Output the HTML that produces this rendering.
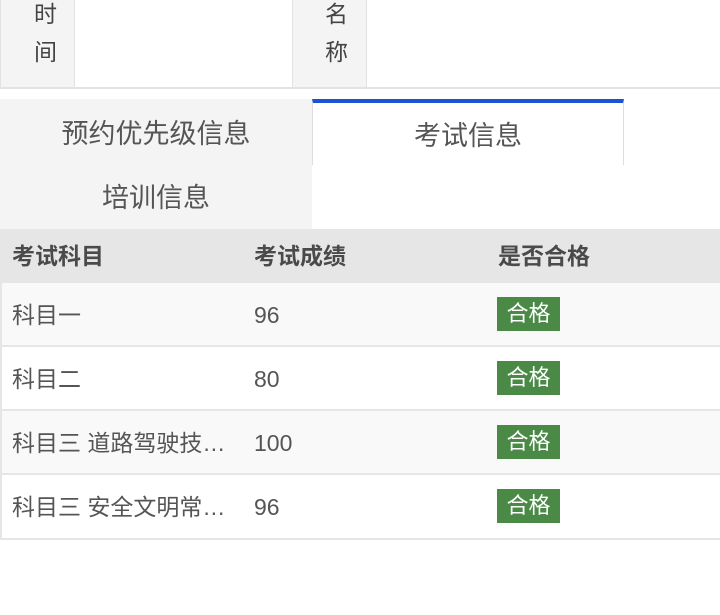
<!DOCTYPE html><html><head><meta charset="utf-8"><style>
*{margin:0;padding:0;box-sizing:border-box}
body{width:720px;height:615px;background:#fff;font-family:"Liberation Sans","Noto Sans CJK SC",sans-serif;color:#555;position:relative;overflow:hidden}
.a{position:absolute}
.lbl{background:#f4f4f4;color:#444;font-size:23px;text-align:center;line-height:38px;border-left:1px solid #e2e2e2;border-right:1px solid #e2e2e2}
.tab{font-size:27px;color:#555;text-align:center;line-height:70px}
.row{position:absolute;left:0;width:720px;height:64px;border-left:2px solid #e6e6e6;border-bottom:2px solid #e6e6e6;font-size:23px;color:#555}
.row span{position:absolute;top:0;line-height:64px}
.badge{position:absolute;left:495px;top:14px;width:63px;height:34px;background:#4a8a46;color:#fff;font-size:22px;text-align:center;line-height:34px}
</style></head><body>
<div class="a lbl" style="left:0;top:-5px;width:75px;height:94px;padding-left:16px">时<br>间</div>
<div class="a lbl" style="left:292px;top:-5px;width:75px;height:94px;padding-left:14px">名<br>称</div>
<div class="a" style="left:0;top:87px;width:720px;height:2px;background:#e2e2e2"></div>
<div class="a tab" style="left:0;top:99px;width:312px;height:66px;background:#f4f4f4">预约优先级信息</div>
<div class="a tab" style="left:312px;top:99px;width:312px;height:66px;background:#fff;border-top:4px solid #1a53d6;border-left:1px solid #ddd;border-right:1px solid #ddd;line-height:66px">考试信息</div>
<div class="a tab" style="left:0;top:165px;width:312px;height:64px;background:#f4f4f4;line-height:66px">培训信息</div>
<div class="a" style="left:0;top:229px;width:720px;height:54px;background:#e6e6e6;font-size:23px;color:#4a4a4a;font-weight:bold">
<span class="a" style="left:12px;line-height:54px">考试科目</span><span class="a" style="left:254px;line-height:54px">考试成绩</span><span class="a" style="left:498px;line-height:54px">是否合格</span></div>
<div class="row" style="top:283px;background:#f9f9f9"><span style="left:10px">科目一</span><span style="left:252px">96</span><div class="badge">合格</div></div>
<div class="row" style="top:347px;background:#fff"><span style="left:10px">科目二</span><span style="left:252px">80</span><div class="badge">合格</div></div>
<div class="row" style="top:411px;background:#f9f9f9"><span style="left:10px">科目三 道路驾驶技…</span><span style="left:252px">100</span><div class="badge">合格</div></div>
<div class="row" style="top:475px;background:#fff;height:65px"><span style="left:10px">科目三 安全文明常…</span><span style="left:252px">96</span><div class="badge">合格</div></div>
</body></html>
